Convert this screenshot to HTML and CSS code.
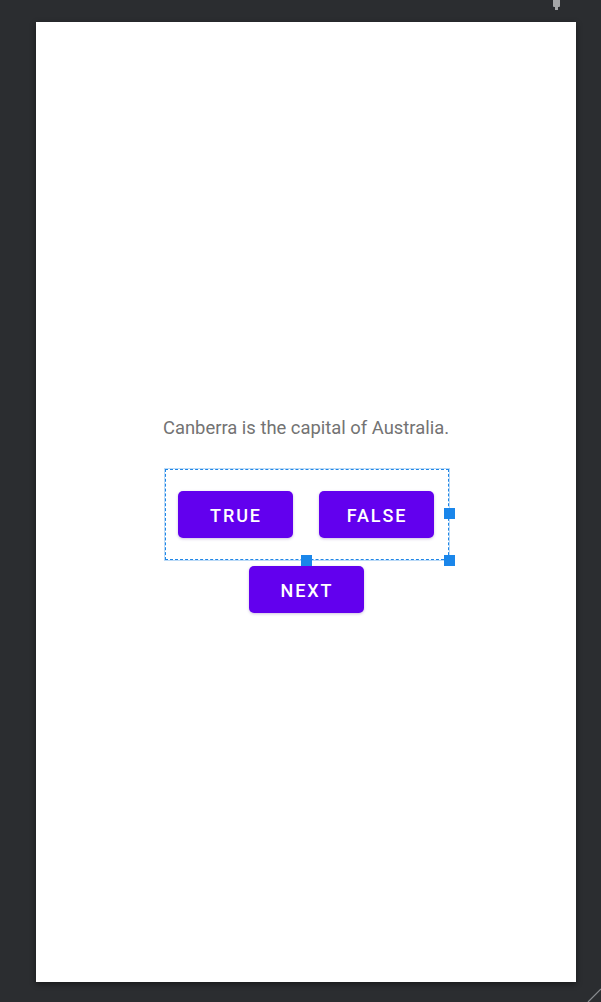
FILE: index.html
```html
<!DOCTYPE html>
<html>
<head>
<meta charset="utf-8">
<link rel="stylesheet" href="styles.css">
</head>
<body>
<div class="pin"></div>
<main class="device">
  <p class="question">Canberra is the capital of Australia.</p>
  <div class="selection">
    <button class="btn">TRUE</button>
    <button class="btn">FALSE</button>
    <span class="handle handle-right"></span>
    <span class="handle handle-bottom"></span>
    <span class="handle handle-corner"></span>
  </div>
  <button class="btn btn-next">NEXT</button>
</main>
<svg class="resize" width="14" height="14" viewBox="0 0 14 14"><line x1="1" y1="14" x2="14" y2="1" stroke="#8a8c90" stroke-width="1.2"/></svg>
</body>
</html>
```
FILE: styles.css
```css
html, body {
  margin: 0;
  padding: 0;
}
body {
  background: #2b2d30;
  width: 601px;
  height: 1002px;
  overflow: hidden;
  position: relative;
  font-family: Roboto, "Noto Sans", sans-serif;
}
.pin {
  position: absolute;
  left: 553px;
  top: 0;
  width: 7px;
  height: 7px;
  background: #a5a6a8;
  border-radius: 0 0 1px 1px;
}
.pin::after {
  content: "";
  position: absolute;
  left: 2px;
  top: 7px;
  width: 3px;
  height: 3px;
  background: #a5a6a8;
}
.device {
  margin: 22px 0 0 36px;
  width: 540px;
  height: 960px;
  background: #ffffff;
  box-shadow: 0 2px 6px rgba(0, 0, 0, 0.45);
  display: flex;
  flex-direction: column;
  align-items: center;
  box-sizing: border-box;
  padding-top: 396px;
}
.question {
  margin: 0;
  font-size: 18.4px;
  line-height: 20px;
  color: #737373;
}
.selection {
  position: relative;
  margin-top: 31px;
  margin-left: 1px;
  width: 284px;
  box-sizing: border-box;
  border: 1px dashed #1f86e6;
  outline: 1px solid rgba(31, 134, 230, 0.3);
  padding: 21px 0 21px 12px;
  display: flex;
  gap: 26px;
}
.btn {
  width: 115px;
  height: 47px;
  border: none;
  border-radius: 5px;
  background: #6200ee;
  color: #ffffff;
  font-family: Roboto, "Noto Sans", sans-serif;
  font-weight: 500;
  font-size: 18px;
  letter-spacing: 1.9px;
  padding: 2px 0 0 2px;
  box-shadow: 0 1px 3px rgba(60, 0, 140, 0.25);
}
.btn-next {
  margin-top: 6px;
}
.handle {
  position: absolute;
  width: 11px;
  height: 11px;
  background: #1a86ea;
}
.handle-right {
  right: -7px;
  top: 38px;
}
.handle-bottom {
  left: 135px;
  bottom: -7px;
}
.handle-corner {
  right: -7px;
  bottom: -7px;
}
.resize {
  position: absolute;
  right: 0;
  bottom: 0;
}
```
